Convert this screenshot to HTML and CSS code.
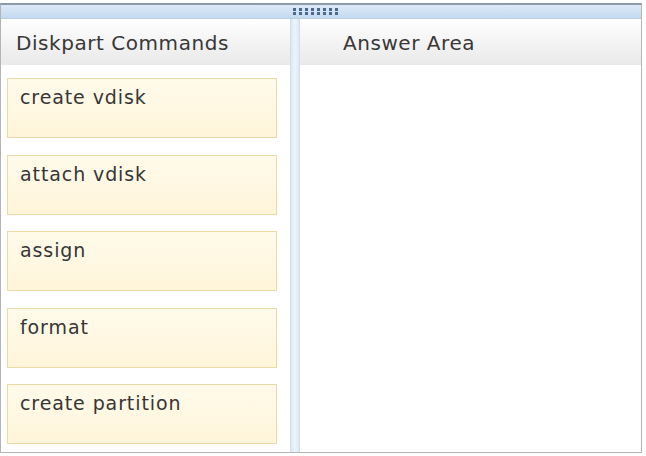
FILE: index.html
```html
<!DOCTYPE html>
<html>
<head>
<meta charset="utf-8">
<link rel="stylesheet" href="styles.css">
</head>
<body>
<div class="window">
  <div class="grip-bar">
    <div class="grip">
      <span></span><span></span><span></span><span></span><span></span><span></span><span></span><span></span>
      <span></span><span></span><span></span><span></span><span></span><span></span><span></span><span></span>
    </div>
  </div>
  <div class="panes">
    <div class="pane pane-left">
      <div class="pane-header">Diskpart Commands</div>
      <div class="cards">
        <div class="card">create vdisk</div>
        <div class="card">attach vdisk</div>
        <div class="card">assign</div>
        <div class="card">format</div>
        <div class="card">create partition</div>
      </div>
    </div>
    <div class="divider"></div>
    <div class="pane pane-right">
      <div class="pane-header answer">Answer Area</div>
    </div>
  </div>
</div>
</body>
</html>
```

FILE: styles.css
```css
html, body {
  margin: 0;
  padding: 0;
  background: #ffffff;
}

body {
  font-family: "DejaVu Sans", Verdana, sans-serif;
  color: #363636;
}

.window {
  box-sizing: border-box;
  margin-top: 3px;
  width: 642px;
  height: 450px;
  border: 1px solid #b4b4b4;
  border-top: 2px solid #8d9aa7;
  display: flex;
  flex-direction: column;
}

.grip-bar {
  height: 13px;
  background: linear-gradient(#dce9f7, #c4daf1);
  border-bottom: 1px solid #b9cfe4;
  display: flex;
  align-items: center;
  padding-left: 292px;
}

.grip {
  display: grid;
  grid-template-columns: repeat(8, 3px);
  column-gap: 3px;
  row-gap: 1px;
}

.grip span {
  width: 3px;
  height: 3px;
  background: #4a6a8c;
}

.panes {
  flex: 1;
  display: grid;
  grid-template-columns: 289px 10px 1fr;
}

.pane-header {
  box-sizing: border-box;
  height: 46px;
  background: linear-gradient(#ffffff, #f6f6f6 40%, #e9e9e9);
  font-size: 20px;
  letter-spacing: 0.55px;
  line-height: 1;
  padding: 14px 0 0 15px;
  color: #383838;
}

.pane-header.answer {
  padding-left: 43px;
}

.divider {
  background: linear-gradient(90deg, #dce8f5, #eef4fb 50%, #dce8f5);
  border-left: 1px solid #cddff0;
  border-right: 1px solid #d2e1f0;
}

.cards {
  display: flex;
  flex-direction: column;
  gap: 16.5px;
  padding: 13px 13px 0 6px;
}

.card {
  box-sizing: border-box;
  height: 60px;
  background: linear-gradient(#fffaea, #fff5da);
  border: 1px solid #e9daa8;
  font-size: 19px;
  letter-spacing: 0.9px;
  line-height: 1;
  padding: 9px 0 0 12px;
  color: #363636;
}
```
